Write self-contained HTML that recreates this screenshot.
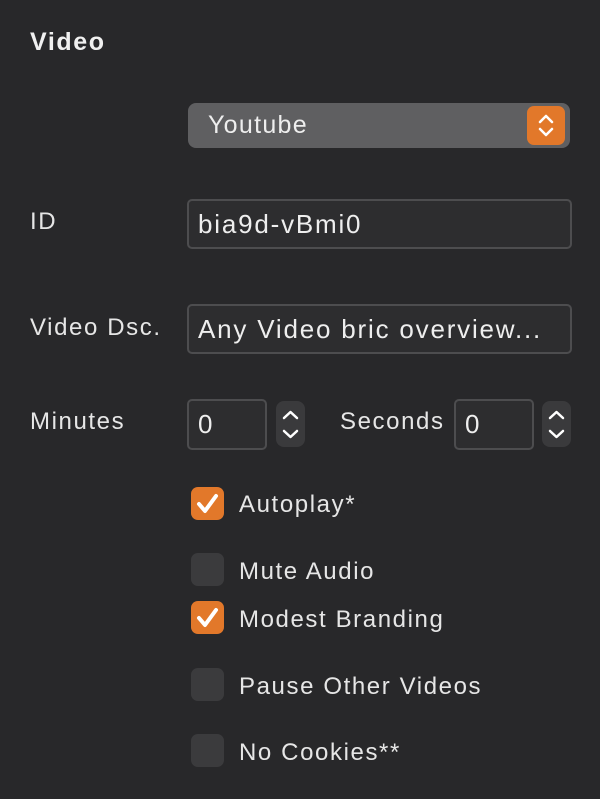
<!DOCTYPE html>
<html><head><style>
body{margin:0;width:600px;height:799px;background:#28282a;font-family:"Liberation Sans",sans-serif;color:#e6e6e6;position:relative;overflow:hidden;letter-spacing:1.6px}
.a{position:absolute}
.lbl{font-size:24px;line-height:28px}
.fld{position:absolute;background:#2d2d2f;border:2px solid #4d4d4f;border-radius:5px;box-sizing:border-box;font-size:26px;color:#eee;padding-left:9px;display:flex;align-items:center;letter-spacing:1.8px}
.st{position:absolute;width:29px;height:46px;background:#3a3a3c;border-radius:8px}
.cb{position:absolute;left:191px;width:33px;height:33px;border-radius:7px;background:#3b3b3d}
.cb.on{background:#e2782a}
</style></head><body>
<div class="a" style="left:30px;top:28px;font-size:25px;font-weight:bold;color:#f0f0f0">Video</div>
<div class="a" style="left:188px;top:103px;width:382px;height:45px;background:#5f5f61;border-radius:8px"></div>
<div class="a lbl" style="left:208px;top:111px;font-size:25px;color:#eee;letter-spacing:1.3px">Youtube</div>
<div class="a" style="left:527px;top:106px;width:38px;height:39px;background:#e2782a;border-radius:7px">
<svg width="38" height="39"><path d="M13 16l6-6 6 6M13 23l6 6 6-6" stroke="#fff" stroke-width="2.5" fill="none" stroke-linecap="round" stroke-linejoin="round"/></svg></div>
<div class="a lbl" style="left:30px;top:208px">ID</div>
<div class="fld" style="left:187px;top:199px;width:385px;height:50px">bia9d-vBmi0</div>
<div class="a lbl" style="left:30px;top:314px">Video Dsc.</div>
<div class="fld" style="left:187px;top:304px;width:385px;height:50px">Any Video bric overview...</div>
<div class="a lbl" style="left:30px;top:408px">Minutes</div>
<div class="fld" style="left:187px;top:399px;width:80px;height:51px">0</div>
<div class="st" style="left:276px;top:401px"><svg width="29" height="46"><path d="M8 17l6.5-6 6.5 6M8 30l6.5 6 6.5-6" stroke="#fff" stroke-width="2.5" fill="none" stroke-linecap="round" stroke-linejoin="round"/></svg></div>
<div class="a lbl" style="left:340px;top:408px">Seconds</div>
<div class="fld" style="left:454px;top:399px;width:80px;height:51px">0</div>
<div class="st" style="left:542px;top:401px"><svg width="29" height="46"><path d="M8 17l6.5-6 6.5 6M8 30l6.5 6 6.5-6" stroke="#fff" stroke-width="2.5" fill="none" stroke-linecap="round" stroke-linejoin="round"/></svg></div>
<div class="cb on" style="top:487px"><svg width="33" height="33"><path d="M8 17l6 7 11-15" stroke="#fff" stroke-width="4" fill="none" stroke-linecap="round" stroke-linejoin="round"/></svg></div>
<div class="a lbl" style="left:239px;top:491px">Autoplay*</div>
<div class="cb" style="top:553px"></div>
<div class="a lbl" style="left:239px;top:558px">Mute Audio</div>
<div class="cb on" style="top:601px"><svg width="33" height="33"><path d="M8 17l6 7 11-15" stroke="#fff" stroke-width="4" fill="none" stroke-linecap="round" stroke-linejoin="round"/></svg></div>
<div class="a lbl" style="left:239px;top:606px">Modest Branding</div>
<div class="cb" style="top:668px"></div>
<div class="a lbl" style="left:239px;top:673px">Pause Other Videos</div>
<div class="cb" style="top:734px"></div>
<div class="a lbl" style="left:239px;top:739px">No Cookies**</div>
</body></html>
